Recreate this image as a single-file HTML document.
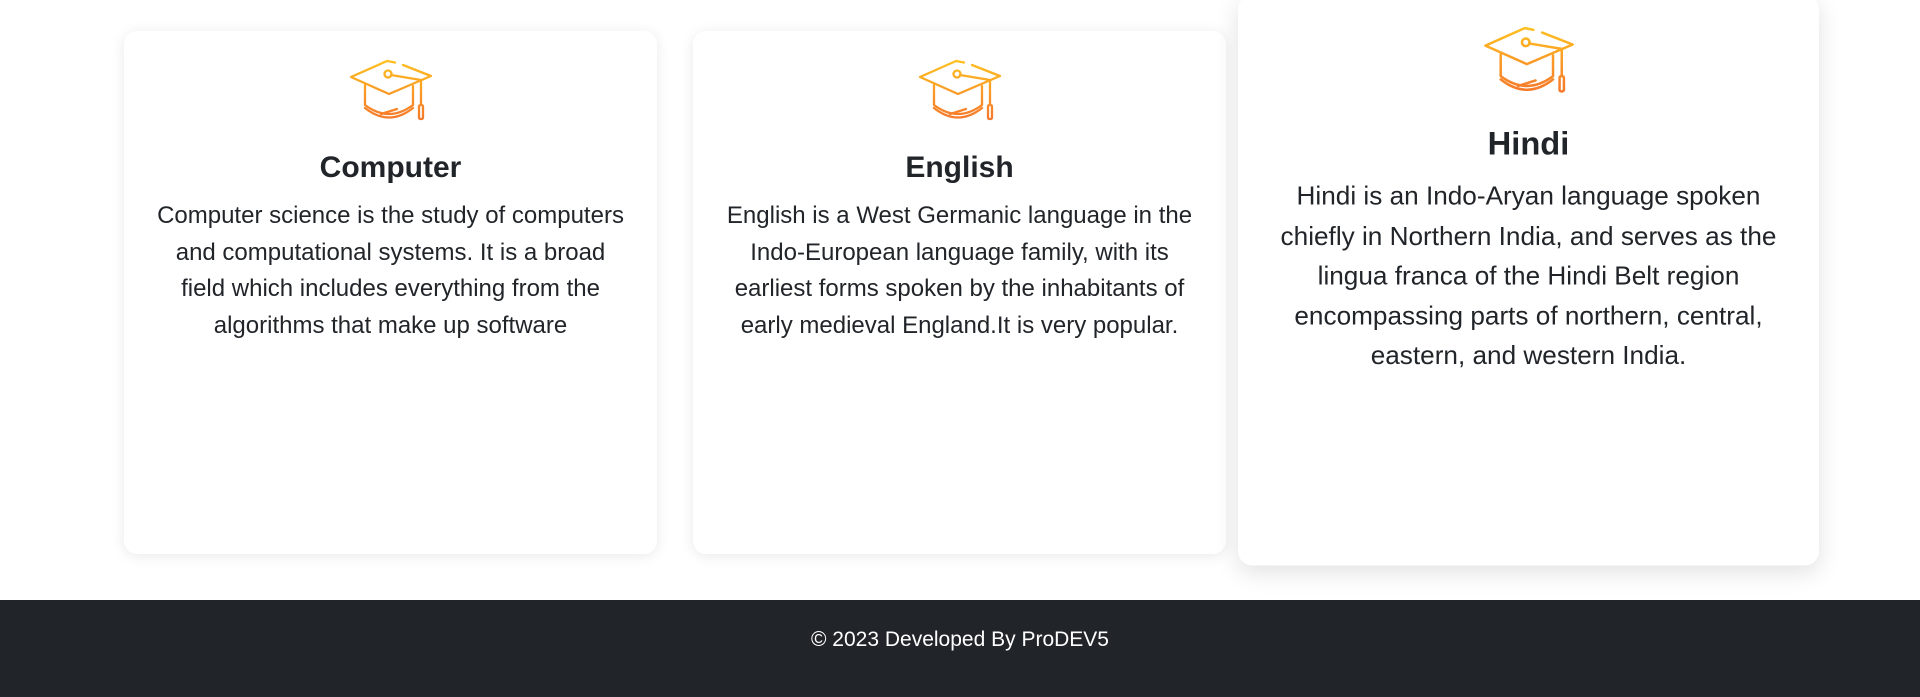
<!DOCTYPE html>
<html><head><style>
html,body{margin:0;padding:0;width:1920px;height:697px;overflow:hidden;background:#fff;font-family:"Liberation Sans",Arial,sans-serif;}
.card{position:absolute;top:31px;width:533px;height:523px;background:#fff;border-radius:13px;box-shadow:0 2px 14px rgba(0,0,0,0.09);text-align:center;box-sizing:border-box;padding:28px 28px;}
.card svg{display:block;margin:0 auto;width:84px;height:64px;}
.card h3{margin:27px 0 12px;font-size:30px;font-weight:bold;color:#212529;line-height:36px;}
.card p{margin:0;font-size:24px;line-height:36.5px;color:#212529;}
.c3{transform:translateY(-12px) scale(1.09);box-shadow:0 6px 22px rgba(0,0,0,0.12);}
footer{position:absolute;left:0;top:600px;width:1920px;height:97px;background:#212529;color:#fff;text-align:center;font-size:21px;line-height:80px;}
</style></head><body>
<svg width="0" height="0" style="position:absolute"><defs><linearGradient id="g" gradientUnits="userSpaceOnUse" x1="0" y1="0" x2="0" y2="62"><stop offset="0" stop-color="#ffc21f"/><stop offset="1" stop-color="#f5772c"/></linearGradient></defs></svg>
<div class="card" style="left:124px">
<svg viewBox="0 0 84 64"><g fill="none" stroke="url(#g)" stroke-width="2.3" stroke-linecap="round" stroke-linejoin="round"><path d="M46 3.5 L38 2 L2 18 L40 35 L82 17 L54 6"/><circle cx="39" cy="15" r="3.5"/><path d="M42 16 L72 21 L72 46"/><rect x="70" y="46" width="4" height="14" rx="1.5"/><path d="M16 26 L16 46 Q40 64 64 46 L64 27"/><path d="M16 49 Q40 68 64 49"/><path d="M32 55 L48 50"/></g></svg>
<h3>Computer</h3>
<p>Computer science is the study of computers and computational systems. It is a broad field which includes everything from the algorithms that make up software</p></div>
<div class="card" style="left:693px">
<svg viewBox="0 0 84 64"><g fill="none" stroke="url(#g)" stroke-width="2.3" stroke-linecap="round" stroke-linejoin="round"><path d="M46 3.5 L38 2 L2 18 L40 35 L82 17 L54 6"/><circle cx="39" cy="15" r="3.5"/><path d="M42 16 L72 21 L72 46"/><rect x="70" y="46" width="4" height="14" rx="1.5"/><path d="M16 26 L16 46 Q40 64 64 46 L64 27"/><path d="M16 49 Q40 68 64 49"/><path d="M32 55 L48 50"/></g></svg>
<h3>English</h3>
<p>English is a West Germanic language in the Indo-European language family, with its earliest forms spoken by the inhabitants of early medieval England.It is very popular.</p></div>
<div class="card c3" style="left:1262px">
<svg viewBox="0 0 84 64"><g fill="none" stroke="url(#g)" stroke-width="2.3" stroke-linecap="round" stroke-linejoin="round"><path d="M46 3.5 L38 2 L2 18 L40 35 L82 17 L54 6"/><circle cx="39" cy="15" r="3.5"/><path d="M42 16 L72 21 L72 46"/><rect x="70" y="46" width="4" height="14" rx="1.5"/><path d="M16 26 L16 46 Q40 64 64 46 L64 27"/><path d="M16 49 Q40 68 64 49"/><path d="M32 55 L48 50"/></g></svg>
<h3>Hindi</h3>
<p>Hindi is an Indo-Aryan language spoken chiefly in Northern India, and serves as the lingua franca of the Hindi Belt region encompassing parts of northern, central, eastern, and western India.</p></div>
<footer>© 2023 Developed By ProDEV5</footer>
</body></html>
